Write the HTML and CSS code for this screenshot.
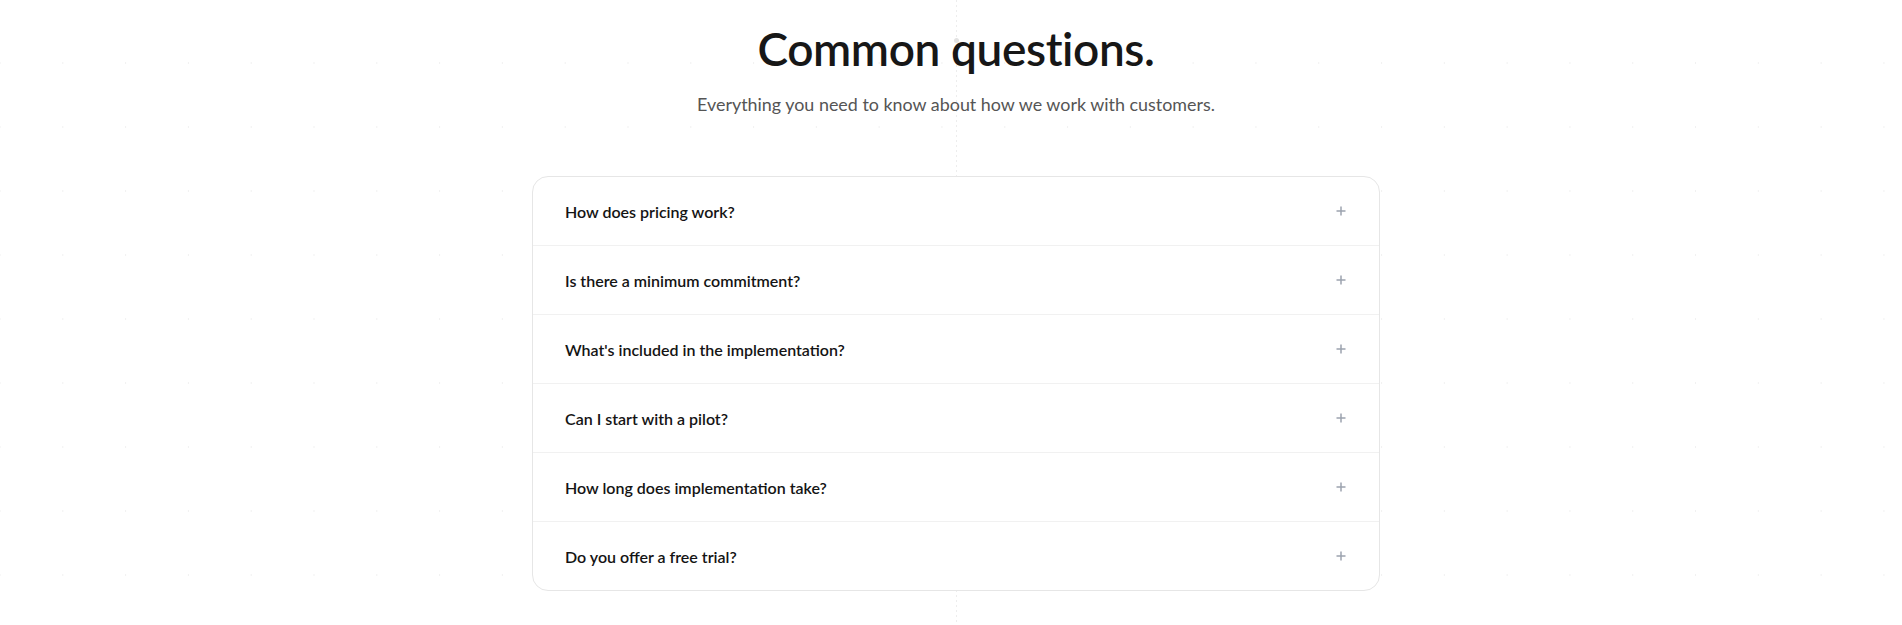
FILE: index.html
```html
<!DOCTYPE html>
<html lang="en">

<head>
    <meta charset="UTF-8">
    <meta name="viewport" content="width=device-width, initial-scale=1.0">
    <title>FAQ</title>
    <link rel="stylesheet" href="styles.css">
</head>

<body>

    <section class="faq">
        <span class="node"></span>
        <h1 class="faq-title">Common questions.</h1>
        <p class="faq-lead">Everything you need to know about how we work with customers.</p>

        <div class="faq-list">
            <div class="faq-item">
                <span class="faq-q">How does pricing work?</span>
                <svg class="faq-plus" viewBox="0 0 12 12"><path d="M6 1.5v9M1.5 6h9" /></svg>
            </div>
            <div class="faq-item">
                <span class="faq-q">Is there a minimum commitment?</span>
                <svg class="faq-plus" viewBox="0 0 12 12"><path d="M6 1.5v9M1.5 6h9" /></svg>
            </div>
            <div class="faq-item">
                <span class="faq-q">What's included in the implementation?</span>
                <svg class="faq-plus" viewBox="0 0 12 12"><path d="M6 1.5v9M1.5 6h9" /></svg>
            </div>
            <div class="faq-item">
                <span class="faq-q">Can I start with a pilot?</span>
                <svg class="faq-plus" viewBox="0 0 12 12"><path d="M6 1.5v9M1.5 6h9" /></svg>
            </div>
            <div class="faq-item">
                <span class="faq-q">How long does implementation take?</span>
                <svg class="faq-plus" viewBox="0 0 12 12"><path d="M6 1.5v9M1.5 6h9" /></svg>
            </div>
            <div class="faq-item">
                <span class="faq-q">Do you offer a free trial?</span>
                <svg class="faq-plus" viewBox="0 0 12 12"><path d="M6 1.5v9M1.5 6h9" /></svg>
            </div>
        </div>
    </section>

</body>

</html>
```

FILE: styles.css
```css
:root {
    --ink: #141414;
    --muted: #555555;
    --line: #e6e6e6;
    --divider: #f1f1f1;
}

body {
    margin: 0;
    height: 100vh;
    overflow: hidden;
    background-color: #ffffff;
    /* faint dot grid */
    background-image: radial-gradient(circle, #f1f1f1 0.6px, transparent 0.9px);
    background-size: 62.8px 64px;
    background-position: -31.4px 31px;
    font-family: "Lato", "Noto Sans", sans-serif;
    color: var(--ink);
}

.faq {
    position: relative;
    display: flex;
    flex-direction: column;
    align-items: center;
    padding: 21px 0 0 10px;
    height: 100%;
    box-sizing: border-box;
}

/* thin center guide behind the content */
.faq:before {
    content: "";
    position: absolute;
    top: 0;
    bottom: 0;
    left: calc(50% + 5px);
    width: 1px;
    background: repeating-linear-gradient(to bottom, #ededed 0 2px, transparent 2px 5px);
    z-index: 0;
}

.node {
    position: absolute;
    top: 38px;
    left: calc(50% + 3px);
    width: 5px;
    height: 5px;
    border-radius: 50%;
    background: #e2e2e2;
}

.faq-title {
    position: relative;
    margin: 0;
    font-size: 46px;
    line-height: 56px;
    font-weight: 600;
    letter-spacing: -0.4px;
    color: #171717;
}

.faq-lead {
    position: relative;
    margin: 13px 0 0;
    font-size: 17.9px;
    line-height: 28px;
    color: var(--muted);
}

.faq-list {
    position: relative;
    z-index: 1;
    width: 848px;
    margin-top: 58px;
    box-sizing: border-box;
    border: 1px solid var(--line);
    border-radius: 16px;
    background: #ffffff;
    overflow: hidden;
}

.faq-item {
    display: flex;
    align-items: center;
    justify-content: space-between;
    height: 68px;
    padding: 0 32px 0 32px;
}

.faq-item+.faq-item {
    border-top: 1px solid var(--divider);
}

.faq-q {
    font-size: 16px;
    font-weight: 600;
    color: var(--ink);
}

.faq-plus {
    width: 12px;
    height: 12px;
    fill: none;
    stroke: #9ca3af;
    stroke-width: 1.5;
}
```
